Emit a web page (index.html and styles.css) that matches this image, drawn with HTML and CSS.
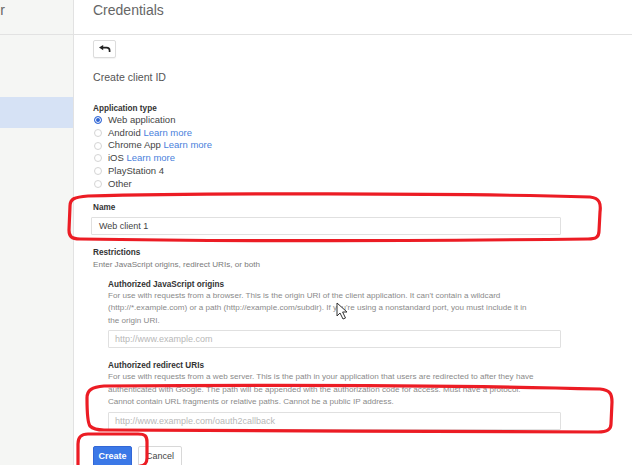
FILE: index.html
```html
<!DOCTYPE html>
<html lang="en">
<head>
<meta charset="utf-8">
<title>Credentials</title>
<link rel="stylesheet" href="styles.css">
</head>
<body>
<div class="app">
  <aside class="sidebar">
    <div class="side-head"><span class="side-title">API Manager</span></div>
    <nav class="side-nav">
      <div class="side-item"></div>
      <div class="side-item"></div>
      <div class="side-item active"></div>
    </nav>
  </aside>
  <main class="main">
    <header class="page-head"><h1 class="page-title">Credentials</h1></header>
    <div class="content">
      <button class="back-btn" type="button" aria-label="Back">
        <svg width="12" height="8" viewBox="0 0 12 8"><polygon points="0,2.6 4.2,0 4.2,5.2" fill="#222"/><path d="M3.5 2.6 H7.6 Q10.6 2.6 10.6 5.4 V7" fill="none" stroke="#222" stroke-width="1.7"/></svg>
      </button>
      <h2 class="sub-title">Create client ID</h2>

      <div class="label app-type">Application type</div>
      <ul class="radios">
        <li class="radio-row"><span class="radio checked"></span>Web application</li>
        <li class="radio-row"><span class="radio"></span>Android <a class="link">Learn more</a></li>
        <li class="radio-row"><span class="radio"></span>Chrome App <a class="link">Learn more</a></li>
        <li class="radio-row"><span class="radio"></span>iOS <a class="link">Learn more</a></li>
        <li class="radio-row"><span class="radio"></span>PlayStation 4</li>
        <li class="radio-row"><span class="radio"></span>Other</li>
      </ul>

      <div class="label name-label">Name</div>
      <div class="input name-input">Web client 1</div>

      <div class="label restr-label">Restrictions</div>
      <div class="hint">Enter JavaScript origins, redirect URIs, or both</div>

      <section class="sub js-sub">
        <div class="label">Authorized JavaScript origins</div>
        <p class="desc">For use with requests from a browser. This is the origin URI of the client application. It can't contain a wildcard (http://*.example.com) or a path (http://example.com/subdir). If you're using a nonstandard port, you must include it in the origin URI.</p>
        <div class="input placeholder">http://www.example.com</div>
      </section>

      <section class="sub redirect-sub">
        <div class="label">Authorized redirect URIs</div>
        <p class="desc">For use with requests from a web server. This is the path in your application that users are redirected to after they have authenticated with Google. The path will be appended with the authorization code for access. Must have a protocol. Cannot contain URL fragments or relative paths. Cannot be a public IP address.</p>
        <div class="input placeholder">http://www.example.com/oauth2callback</div>
      </section>

      <div class="actions">
        <button class="btn primary" type="button">Create</button>
        <button class="btn" type="button">Cancel</button>
      </div>
    </div>
  </main>
</div>

<svg class="annot" width="632" height="465" viewBox="0 0 632 465" aria-hidden="true">
  <g fill="none" stroke="#ec1c24" stroke-width="3.2" stroke-linecap="round" stroke-linejoin="round">
    <path d="M88 196 C200 193 450 193 590 197 C600 198 601 204 600 212 L599 231 C599 237 596 239 588 239 C400 241 200 241 80 239 C71 239 69 236 69 230 L70 206 C70 199 74 197 88 196 Z"/>
    <path d="M104 386 C250 385 450 385 600 389 C610 390 612 394 612 402 L611 424 C611 430 607 432 598 432 C450 432 250 430 104 430 C95 430 92 428 90 426 C87 422 87 410 87 398 C87 390 92 387 104 386 Z"/>
    <path d="M140 466 C144 466 147 463 147 458 L147 442 C147 436 145 434 138 434 L88 434 C81 434 78 437 78 444 L78 470"/>
  </g>
  <path d="M337 303 L337 316 L340 313 L343 319 L345.5 318 L342.6 312 L347 312 Z" fill="#fff" stroke="#333" stroke-width="1" stroke-linejoin="round"/>
</svg>
</body>
</html>
```

FILE: styles.css
```css
* { box-sizing: border-box; }

html, body {
  margin: 0;
  padding: 0;
  width: 632px;
  height: 465px;
  overflow: hidden;
  background: #fff;
  font-family: "Liberation Sans", Arial, sans-serif;
  color: #333;
}

.app {
  display: flex;
  height: 465px;
}

/* sidebar */
.sidebar {
  width: 74px;
  flex: none;
  background: #f5f6f4;
  border-right: 1px solid #e2e2e2;
}

.side-head {
  height: 35px;
  border-bottom: 1px solid #e2e2e2;
  display: flex;
  justify-content: flex-end;
  overflow: hidden;
  padding-right: 68px;
  white-space: nowrap;
}

.side-title {
  font-size: 14px;
  line-height: 20px;
  color: #666;
}

.side-item {
  height: 31px;
}

.side-item.active {
  background: #d6e2f5;
}

/* main */
.main {
  flex: 1;
  min-width: 0;
}

.page-head {
  height: 35px;
  border-bottom: 1px solid #e2e2e2;
  padding-left: 19px;
}

.page-title {
  margin: 0;
  font-size: 14px;
  line-height: 20px;
  font-weight: 400;
  color: #666;
}

.content {
  padding-left: 19px;
  width: 487px;
}

.back-btn {
  display: flex;
  align-items: center;
  justify-content: center;
  margin-top: 5px;
  width: 23px;
  height: 18px;
  padding: 0;
  background: #fff;
  border: 1px solid #dcdcdc;
  border-radius: 2px;
  box-shadow: 0 1px 1px rgba(0,0,0,0.05);
}

.sub-title {
  margin: 12px 0 0;
  font-size: 10.6px;
  line-height: 14px;
  font-weight: 400;
  color: #555;
}

.label {
  font-size: 8.2px;
  line-height: 10px;
  font-weight: 700;
  color: #333;
}

.app-type { margin-top: 20px; }

.radios {
  list-style: none;
  margin: 0;
  padding: 0;
}

.radio-row {
  display: flex;
  align-items: center;
  font-size: 9.5px;
  line-height: 12.7px;
  color: #444;
  white-space: pre;
}

.radio {
  flex: none;
  width: 8px;
  height: 8px;
  margin: 0 6px 0 1px;
  border: 1px solid #d4d4d4;
  border-radius: 50%;
  background: #fff;
}

.radio.checked {
  border-color: #3b6fd8;
  background: #2f64d4;
  box-shadow: inset 0 0 0 1px #fff;
}

.link {
  color: #4a7fdc;
  text-decoration: none;
}

.name-label { margin-top: 12.5px; }

.input {
  height: 18px;
  border: 1px solid #e0e0e0;
  border-radius: 1px;
  font-size: 9px;
  line-height: 16px;
  padding-left: 7px;
  color: #444;
  background: #fff;
}

.name-input {
  margin-top: 4px;
  margin-left: -2px;
  width: 470px;
}

.placeholder {
  color: #b8b8b8;
  margin-top: 3px;
  padding-left: 6px;
}

.restr-label { margin-top: 13.5px; }

.hint {
  font-size: 8.1px;
  line-height: 13.5px;
  color: #7a7a7a;
}

.sub {
  padding-left: 15px;
}

.js-sub { margin-top: 8px; }
.redirect-sub { margin-top: 13px; }

.desc {
  margin: 0;
  max-width: 431px;
  font-size: 8.1px;
  line-height: 12.5px;
  color: #8a8a8a;
}

.actions {
  display: flex;
  gap: 6px;
  margin-top: 16px;
}

.btn {
  height: 21px;
  padding: 0 7px;
  font-family: inherit;
  font-size: 9px;
  font-weight: 400;
  color: #444;
  background: #fff;
  border: 1px solid #d8d8d8;
  border-radius: 2px;
}

.btn.primary {
  width: 39px;
  padding: 0;
  color: #fff;
  background: #3b78e7;
  border-color: #3367d6;
  font-weight: 700;
}

/* screenshot annotations drawn over the page */
.annot {
  position: absolute;
  top: 0;
  left: 0;
  pointer-events: none;
}
```
